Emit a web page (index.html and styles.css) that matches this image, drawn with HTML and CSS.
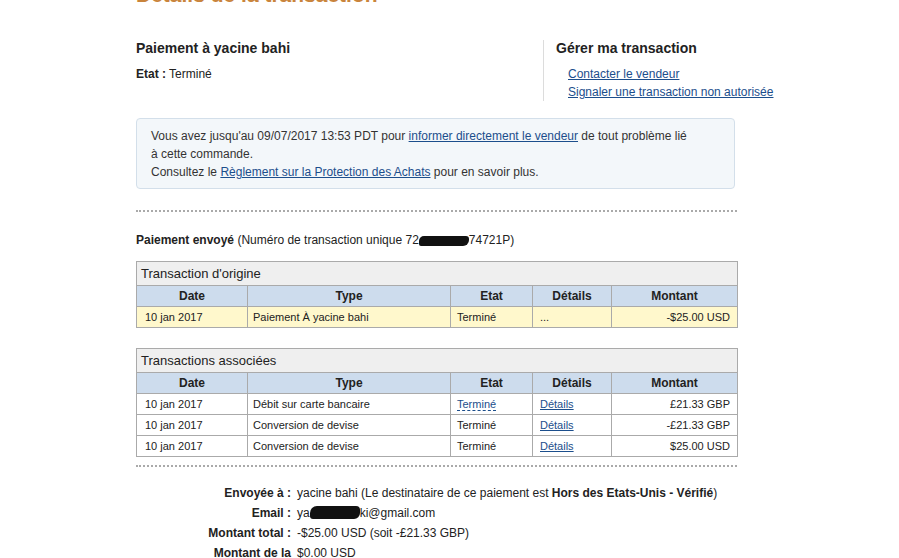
FILE: index.html
```html
<!DOCTYPE html>
<html lang="fr">
<head>
<meta charset="utf-8">
<title>Détails de la transaction</title>
<link rel="stylesheet" href="styles.css">
</head>
<body>
<div class="page">
  <h1 class="title">Détails de la transaction</h1>

  <div class="summary">
    <div class="summary-left">
      <h2 class="sub">Paiement à yacine bahi</h2>
      <p class="state"><b>Etat :</b> Terminé</p>
    </div>
    <div class="summary-right">
      <h2 class="sub">Gérer ma transaction</h2>
      <ul class="links">
        <li><a href="#">Contacter le vendeur</a></li>
        <li><a href="#">Signaler une transaction non autorisée</a></li>
      </ul>
    </div>
  </div>

  <div class="notice">
    <p>Vous avez jusqu'au 09/07/2017 13:53 PDT pour <a href="#">informer directement le vendeur</a> de tout problème lié à cette commande.</p>
    <p>Consultez le <a href="#">Règlement sur la Protection des Achats</a> pour en savoir plus.</p>
  </div>

  <div class="dots"></div>

  <p class="sent"><b>Paiement envoyé</b> (Numéro de transaction unique 72<span class="redact r1"></span>74721P)</p>

  <table class="tx">
    <caption>Transaction d'origine</caption>
    <colgroup><col class="c1"><col class="c2"><col class="c3"><col class="c4"><col class="c5"></colgroup>
    <thead><tr><th>Date</th><th>Type</th><th>Etat</th><th>Détails</th><th>Montant</th></tr></thead>
    <tbody>
      <tr class="hl"><td>10 jan 2017</td><td>Paiement À yacine bahi</td><td>Terminé</td><td>...</td><td class="amt">-$25.00 USD</td></tr>
    </tbody>
  </table>

  <table class="tx second">
    <caption>Transactions associées</caption>
    <colgroup><col class="c1"><col class="c2"><col class="c3"><col class="c4"><col class="c5"></colgroup>
    <thead><tr><th>Date</th><th>Type</th><th>Etat</th><th>Détails</th><th>Montant</th></tr></thead>
    <tbody>
      <tr><td>10 jan 2017</td><td>Débit sur carte bancaire</td><td><span class="dashed">Terminé</span></td><td><a href="#">Détails</a></td><td class="amt">£21.33 GBP</td></tr>
      <tr><td>10 jan 2017</td><td>Conversion de devise</td><td>Terminé</td><td><a href="#">Détails</a></td><td class="amt">-£21.33 GBP</td></tr>
      <tr><td>10 jan 2017</td><td>Conversion de devise</td><td>Terminé</td><td><a href="#">Détails</a></td><td class="amt">$25.00 USD</td></tr>
    </tbody>
  </table>

  <div class="dots dots2"></div>

  <dl class="details">
    <dt>Envoyée à :</dt><dd>yacine bahi (Le destinataire de ce paiement est <b>Hors des Etats-Unis - Vérifié</b>)</dd>
    <dt>Email :</dt><dd>ya<span class="redact r2"></span>ki@gmail.com</dd>
    <dt>Montant total :</dt><dd>-$25.00 USD (soit -£21.33 GBP)</dd>
    <dt>Montant de la</dt><dd>$0.00 USD</dd>
  </dl>
</div>
</body>
</html>
```
FILE: styles.css
```css
html, body {
  margin: 0;
  padding: 0;
  background: #fff;
}
body {
  font-family: "Liberation Sans", Arial, sans-serif;
  font-size: 12px;
  color: #222;
  overflow: hidden;
}
.page {
  width: 601px;
  margin-left: 136px;
  margin-top: -17px;
}
.title {
  margin: 0;
  font-size: 21px;
  line-height: 24px;
  font-weight: bold;
  color: #c9843c;
}
.summary {
  display: flex;
  margin-top: 33px;
}
.summary-left {
  flex: none;
  width: 407px;
}
.summary-right {
  flex: none;
  white-space: nowrap;
  border-left: 1px solid #dcdcdc;
  padding-left: 12px;
}
.sub {
  margin: 0;
  font-size: 14px;
  line-height: 16px;
  font-weight: bold;
  color: #222;
}
.state {
  margin: 10px 0 0;
  line-height: 16px;
}
.links {
  list-style: none;
  margin: 9px 0 0;
  padding: 0 0 0 12px;
  line-height: 18px;
}
a {
  color: #1c4e8c;
  text-decoration: underline;
}
.notice {
  margin-top: 17px;
  width: 583px;
  background: #f3f7fa;
  border: 1px solid #d3dfea;
  border-radius: 4px;
  padding: 8px 0 8px 14px;
  height: 53px;
  line-height: 18px;
  color: #333;
}
.notice p {
  margin: 0;
  width: 548px;
}
.notice p:first-child {
  width: 540px;
}
.dots {
  margin-top: 21px;
  border-top: 2px dotted #aaa;
}
.sent {
  margin: 20px 0 0;
  line-height: 16px;
  color: #222;
}
.redact {
  display: inline-block;
  background: #111;
  vertical-align: -2px;
  border-radius: 5px 3px 6px 2px;
}
.r1 { width: 50px; height: 10px; }
.r2 { width: 50px; height: 13px; border-radius: 7px 4px 6px 3px; }
.tx {
  width: 601px;
  border-collapse: collapse;
  margin-top: 13px;
  table-layout: fixed;
}
.second {
  margin-top: 20px;
}
.tx caption {
  text-align: left;
  background: #efefef;
  border: 1px solid #aaa;
  border-bottom: none;
  font-size: 13px;
  line-height: 23px;
  padding: 0 4px;
  color: #222;
}
.c1 { width: 111px; }
.c2 { width: 203px; }
.c3 { width: 82px; }
.c4 { width: 79px; }
.c5 { width: 126px; }
.tx th {
  background: #cddced;
  border: 1px solid #aaa;
  font-weight: bold;
  font-size: 12px;
  height: 20px;
  padding: 0;
  color: #222;
}
.tx td {
  border: 1px solid #aaa;
  height: 20px;
  padding: 0 5px;
  font-size: 11px;
  color: #222;
}
.tx td:first-child {
  padding-left: 8px;
}
.tx td:nth-child(3) {
  padding-left: 6px;
}
.tx td:nth-child(4) {
  padding-left: 7px;
}
.tx .hl td {
  background: #fff8cc;
}
.tx td.amt {
  text-align: right;
  padding-right: 7px;
}
.dashed {
  color: #1c4e8c;
  border-bottom: 1px dashed #1c4e8c;
}
.dots2 {
  margin-top: 8px;
}
.details {
  display: grid;
  grid-template-columns: 155px auto;
  column-gap: 6px;
  row-gap: 4px;
  margin: 18px 0 0;
  line-height: 16px;
}
.details dt {
  text-align: right;
  font-weight: bold;
  color: #222;
}
.details dd {
  margin: 0;
  color: #222;
}
```
